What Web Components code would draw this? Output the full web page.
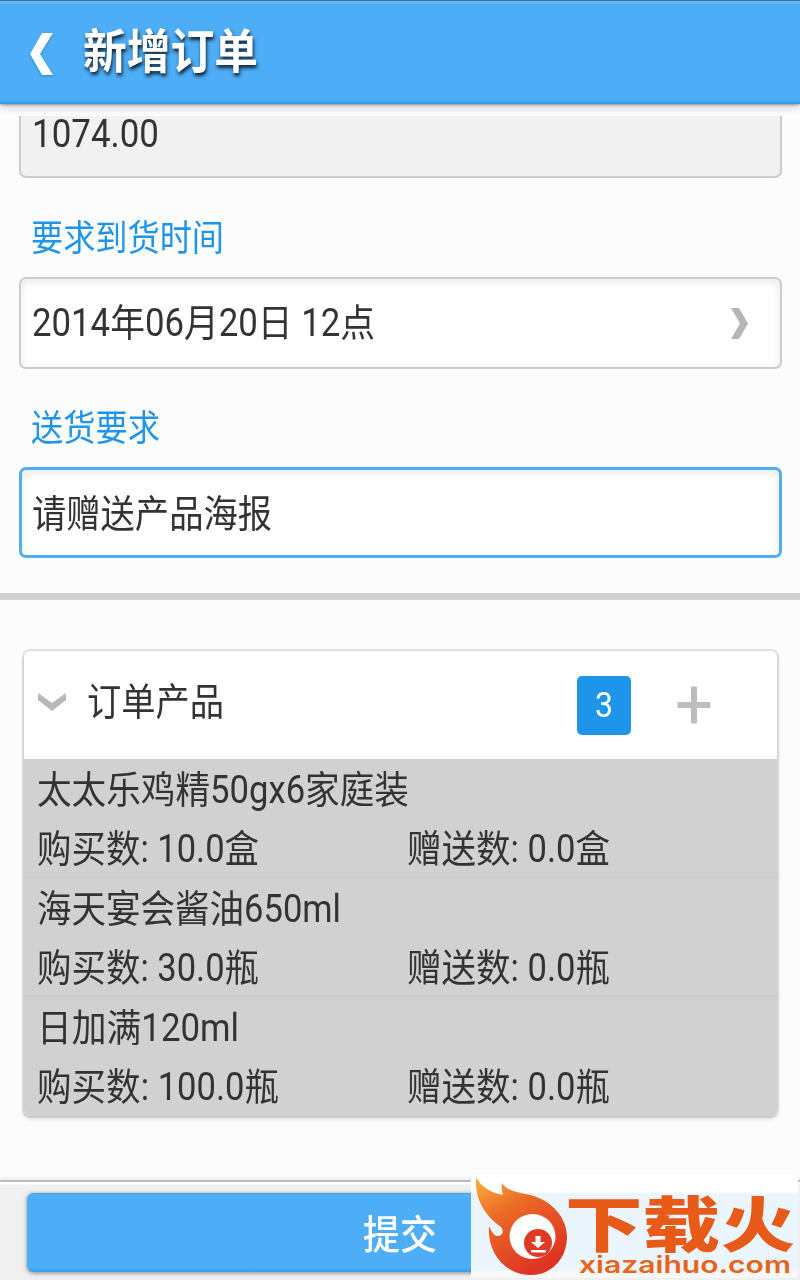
<!DOCTYPE html>
<html lang="zh-CN">
<head>
<meta charset="utf-8">
<title>新增订单</title>
<style>
  body {
    margin: 0;
    background: #fcfcfc;
    font-family: Roboto, "Noto Sans CJK SC", sans-serif;
    color: #333;
  }
</style>
</head>
<body>
<order-page></order-page>

<script>
// Text squeezed or stretched horizontally to a fixed width.
class FitText extends HTMLElement {
  connectedCallback() {
    const shadow = this.attachShadow({ mode: 'open' })
    shadow.innerHTML = `
      <style>
        :host {
          display: block;
          flex: none;
          width: ${this.getAttribute('w')}px;
          white-space: nowrap;
        }
        span {
          display: inline-block;
          transform-origin: 0 50%;
        }
      </style>
      <span><slot></slot></span>
    `
    const span = shadow.querySelector('span')
    const natural = span.getBoundingClientRect().width
    if (natural) span.style.transform = `scaleX(${this.getAttribute('w') / natural})`
  }
}

class TitleBar extends HTMLElement {
  connectedCallback() {
    const shadow = this.attachShadow({ mode: 'open' })
    shadow.innerHTML = `
      <style>
        :host {
          position: relative;
          z-index: 1;
          display: flex;
          box-sizing: border-box;
          height: 104px;
          padding-left: 30px;
          background: linear-gradient(#3f6f98 0 1px, #62b8f9 1px 3px, #4dadf7 4px 100px, #319ae8 103px);
          box-shadow: 0 1px 2px rgba(0, 0, 0, .3), 0 3px 8px rgba(0, 0, 0, .2);
          color: #fff;
          font-size: 47px;
          font-weight: 700;
          line-height: 104px;
          text-shadow: 1px 3px 4px rgba(0, 0, 0, .8);
        }
        svg {
          margin: 33px 30px 0 0;
          filter: drop-shadow(0 1px 1px rgba(0, 60, 120, .4));
        }
      </style>
      <svg width="23" height="42" viewBox="0 0 23 42"><path d="M12 0h11L10 21l13 21H12L0 21z" fill="#fff"/></svg>
      <slot></slot>
    `
  }
}

class FormField extends HTMLElement {
  connectedCallback() {
    const shadow = this.attachShadow({ mode: 'open' })
    shadow.innerHTML = `
      <style>
        :host {
          display: flex;
          align-items: center;
          justify-content: space-between;
          box-sizing: border-box;
          height: 92px;
          padding: 0 32px 0 11px;
          border: 2px solid #ccc;
          border-radius: 7px;
          background: #fff;
          box-shadow: inset 0 3px 8px rgba(0, 0, 0, .09);
          font-size: 38px;
          line-height: 60px;
        }
        :host([readonly]) {
          height: 62px;
          align-items: flex-start;
          border-top: 0;
          border-radius: 0 0 7px 7px;
          background: #f1f1f1;
          box-shadow: none;
        }
        :host([focused]) {
          height: 91px;
          padding: 3px 32px 0 10px;
          border: 3px solid #4dadf7;
        }
        svg { display: none; }
        :host([picker]) svg { display: block; }
      </style>
      <slot></slot>
      <svg width="17" height="31" viewBox="0 0 17 31"><path d="M0 0h8l9 15.5L8 31H0l9-15.500z" fill="#b5b5b5"/></svg>
    `
  }
}

class FieldLabel extends HTMLElement {
  connectedCallback() {
    const shadow = this.attachShadow({ mode: 'open' })
    shadow.innerHTML = `
      <style>
        :host {
          display: block;
          padding-left: 12px;
          color: #1e95ea;
          font-size: 36px;
          line-height: 50px;
        }
      </style>
      <slot></slot>
    `
  }
}

class ProductRow extends HTMLElement {
  connectedCallback() {
    const shadow = this.attachShadow({ mode: 'open' })
    shadow.innerHTML = `
      <style>
        :host {
          display: grid;
          grid-template-columns: 370px auto;
          grid-template-rows: 59px 59px;
          box-sizing: border-box;
          height: 119px;
          padding-left: 13px;
          border-bottom: 1px solid #c6c6c6;
          background: #d1d1d1;
          font-size: 38px;
          line-height: 62px;
        }
        :host(:last-child) { border-bottom: 0; }
        .name { grid-column: 1 / 3; }
      </style>
      <div class="name"><slot name="name"></slot></div>
      <slot name="bought"></slot>
      <slot name="gift"></slot>
    `
  }
}

class ProductPanel extends HTMLElement {
  connectedCallback() {
    const shadow = this.attachShadow({ mode: 'open' })
    shadow.innerHTML = `
      <style>
        :host {
          display: block;
          height: 465px;
          border-radius: 6px;
          overflow: hidden;
          background: #fff;
          box-shadow: 0 0 1px 2px rgba(0, 0, 0, .09), 0 2px 5px rgba(0, 0, 0, .18);
        }
        header {
          display: flex;
          align-items: center;
          height: 108px;
          padding: 0 66px 0 14px;
          font-size: 38px;
          line-height: 60px;
        }
        .arrow { margin: -6px 21px 0 0; }
        .title { flex: 1; margin-top: -6px; }
        .count {
          display: flex;
          justify-content: center;
          width: 54px;
          height: 59px;
          border-radius: 5px;
          margin-right: 46px;
          background: #1e95ea;
          color: #fff;
          font-size: 35px;
        }
      </style>
      <header>
        <svg class="arrow" width="28" height="18" viewBox="0 0 28 18"><path d="M0 0l14 10L28 0v7L14 18 0 7z" fill="#b8b8b8"/></svg>
        <div class="title"><slot name="title"></slot></div>
        <div class="count"><fit-text w="18">${this.getAttribute('count')}</fit-text></div>
        <svg width="34" height="38" viewBox="0 0 34 38"><path d="M14.500 1h5v15.500H33v5H19.500V37h-5V21.500H1v-5h13.500z" fill="#bdbdbd" stroke="#bdbdbd" stroke-linejoin="round"/></svg>
      </header>
      <slot></slot>
    `
  }
}

class SubmitBar extends HTMLElement {
  connectedCallback() {
    const shadow = this.attachShadow({ mode: 'open' })
    shadow.innerHTML = `
      <style>
        :host {
          display: block;
          box-sizing: border-box;
          height: 100px;
          padding: 11px 27px 0;
          border-top: 2px solid #bbb;
          background: linear-gradient(#fff 0 2px, #f0f0f0 3px);
          box-shadow: 0 -2px 4px rgba(0, 0, 0, .08);
        }
        .button {
          display: flex;
          justify-content: center;
          height: 79px;
          border-radius: 6px;
          background: linear-gradient(#3fa0ec, #55b2f9 2px, #4dadf7 4px 75px, #359be8);
          box-shadow: 0 1px 4px rgba(0, 0, 0, .45);
          color: #fff;
          font-size: 40px;
          font-weight: 500;
          line-height: 85px;
        }
      </style>
      <div class="button"><slot></slot></div>
    `
  }
}

class SiteBadge extends HTMLElement {
  connectedCallback() {
    const shadow = this.attachShadow({ mode: 'open' })
    shadow.innerHTML = `
      <style>
        :host {
          position: absolute;
          z-index: 2;
          left: 471px;
          top: 1175px;
          width: 327px;
          height: 103px;
          background: linear-gradient(#fff 0 17px, #eaf5fe 19px 95px, #f8f8f8 97px);
        }
        svg { display: block; overflow: visible; }
        text { font-family: "Liberation Sans", "Noto Sans CJK SC", sans-serif; font-weight: 900; fill: #e75a17; }
        .url { font-family: Inter, sans-serif; font-weight: 600; fill: #e8641b; }
      </style>
      <svg width="327" height="103" viewBox="0 0 327 103">
        <defs>
          <linearGradient id="flame" x1="0" y1="0" x2=".55" y2="1">
            <stop offset="0" stop-color="#fbb03b"/>
            <stop offset=".4" stop-color="#ec6a26"/>
            <stop offset="1" stop-color="#de3423"/>
          </linearGradient>
        </defs>
        <path d="M5 2C10 12 20 18 32 20c-1-4-2-7-1-12 5 8 15 9 28 12 21 5 37 22 37 42 0 22-16 38-36 38-26 0-44-22-42-49 2 5 5 10 9 10 5 0 6-5 3-9C11 38 4 22 5 2z" fill="url(#flame)"/>
        <ellipse cx="61.500" cy="61.500" rx="23" ry="22.500" fill="#fff"/>
        <circle cx="67" cy="68" r="14" fill="#de3b24"/>
        <path d="M64.500 61h5v6h4.500l-7 6-7-6h4.500zM60 75h15v2.500H60z" fill="#fff"/>
        <text x="94" y="72" font-size="60" textLength="155" lengthAdjust="spacingAndGlyphs">下载</text>
        <text x="250" y="72" font-size="60" textLength="74" lengthAdjust="spacingAndGlyphs">火</text>
        <text class="url" x="108" y="98" font-size="24" textLength="212" lengthAdjust="spacingAndGlyphs">xiazaihuo.com</text>
      </svg>
    `
  }
}

class OrderPage extends HTMLElement {
  connectedCallback() {
    const shadow = this.attachShadow({ mode: 'open' })
    const products = [
      ['太太乐鸡精50gx6家庭装', 372, '购买数: 10.0盒', 222, '赠送数: 0.0盒'],
      ['海天宴会酱油650ml', 304, '购买数: 30.0瓶', 222, '赠送数: 0.0瓶'],
      ['日加满120ml', 202, '购买数: 100.0瓶', 242, '赠送数: 0.0瓶'],
    ]
    shadow.innerHTML = `
      <style>
        :host {
          display: flex;
          flex-direction: column;
          position: relative;
          width: 800px;
          height: 1280px;
          overflow: hidden;
        }
        .form {
          flex: none;
          box-sizing: border-box;
          height: 489px;
          padding: 12px 18px 0 19px;
        }
        .amount { display: block; margin-top: -12px; }
        .first { margin: 36px 0 13px; }
        .second { margin: 35px 0 13px; }
        hr {
          flex: none;
          width: 100%;
          height: 7px;
          margin: 0;
          border: 0;
          background: #d0d0d0;
        }
        .list {
          flex: 1;
          padding: 51px 23px 0 24px;
        }
      </style>
      <title-bar><fit-text w="175">新增订单</fit-text></title-bar>
      <div class="form">
        <form-field readonly><fit-text class="amount" w="127">1074.00</fit-text></form-field>
        <field-label class="first"><fit-text w="193">要求到货时间</fit-text></field-label>
        <form-field picker><fit-text w="343">2014年06月20日 12点</fit-text></form-field>
        <field-label class="second"><fit-text w="129">送货要求</fit-text></field-label>
        <form-field focused><fit-text w="240">请赠送产品海报</fit-text></form-field>
      </div>
      <hr>
      <div class="list">
        <product-panel count="3">
          <fit-text slot="title" w="137">订单产品</fit-text>
          ${products.map(([name, nameW, bought, boughtW, gift]) => `
            <product-row>
              <fit-text slot="name" w="${nameW}">${name}</fit-text>
              <fit-text slot="bought" w="${boughtW}">${bought}</fit-text>
              <fit-text slot="gift" w="203">${gift}</fit-text>
            </product-row>
          `).join('')}
        </product-panel>
      </div>
      <submit-bar><fit-text w="74">提交</fit-text></submit-bar>
      <site-badge></site-badge>
    `
  }
}

customElements.define('title-bar', TitleBar)
customElements.define('form-field', FormField)
customElements.define('field-label', FieldLabel)
customElements.define('product-row', ProductRow)
customElements.define('product-panel', ProductPanel)
customElements.define('submit-bar', SubmitBar)
customElements.define('site-badge', SiteBadge)
customElements.define('order-page', OrderPage)
// Last, so the text is already laid out by its parents when it is measured
customElements.define('fit-text', FitText)
</script>
</body>
</html>
